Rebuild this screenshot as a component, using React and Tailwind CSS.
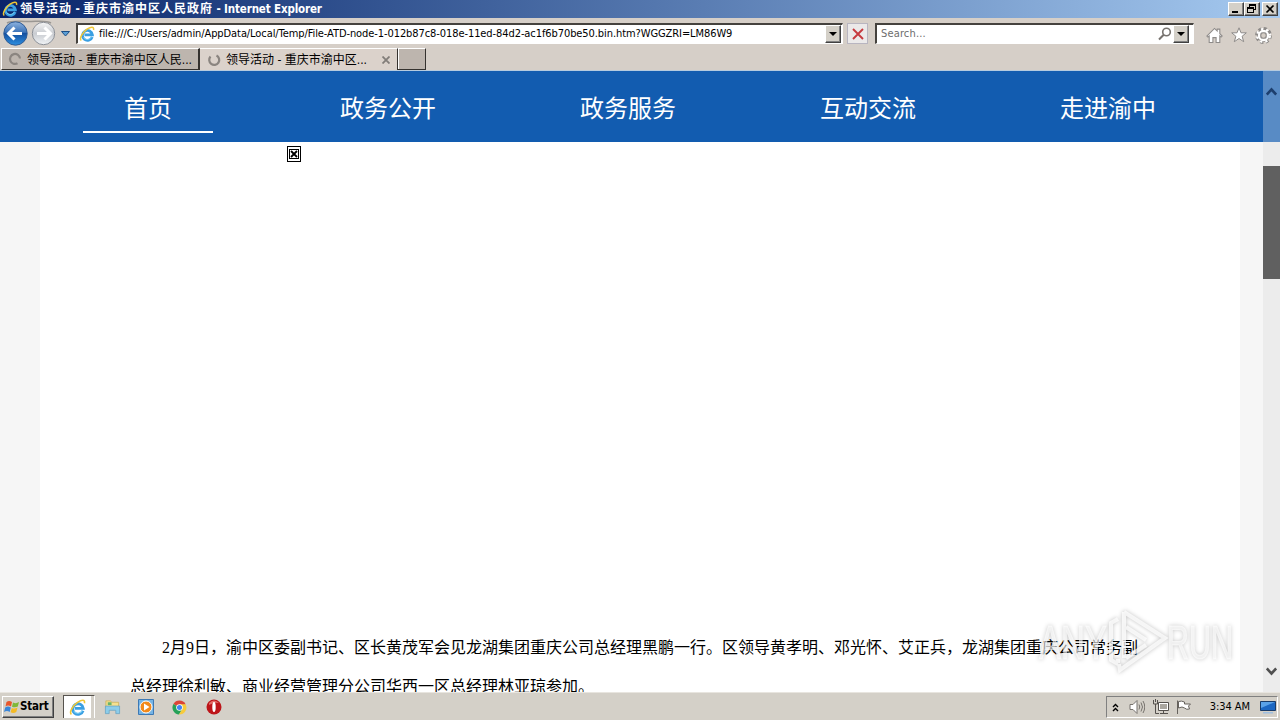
import { useState } from 'react'
import clsx from 'clsx'

const navItems = ['首页', '政务公开', '政务服务', '互动交流', '走进渝中']

const raised = 'bg-[#d4d0c8] border border-t-white border-l-white border-r-[#404040] border-b-[#404040] shadow-[inset_-1px_-1px_0_#808080]'
const sunken = 'bg-white border-t-2 border-l-2 border-t-[#45423e] border-l-[#45423e] border-r border-b border-r-white border-b-white'

function IeLogo({ className }) {
  return (
    <svg viewBox="0 0 16 16" className={className} fill="none">
      <path d="M13.200 11A5 5 0 1 1 13.400 8.800H5.500" stroke="#3a9fe2" strokeWidth="2.700" />
      <path d="M12.500 10.800A4.700 4.700 0 0 1 4.500 11.500" stroke="#7fd2f7" strokeWidth="1" />
      <path d="M2.300 14.500C-.2 12.700 3.600 6.300 8 3.200 11.800.7 15.300 0 14.500 4" stroke="#f0c736" strokeWidth="1.500" />
    </svg>
  )
}

function DropButton({ className }) {
  return (
    <button className={clsx('flex items-center justify-center shrink-0', raised, className)}>
      <svg viewBox="0 0 8 4" className="w-[8px] h-[4px]"><path d="M0 0h8L4 4z" fill="#000" /></svg>
    </button>
  )
}

function TitleBar() {
  return (
    <div className="h-[18px] flex items-center shrink-0 bg-linear-to-r from-[#0a246a] to-[#a6caf0] pl-[2px] pr-[2px]">
      <IeLogo className="w-[16px] h-[16px] shrink-0" />
      <h1 className="ml-[2px] text-[11.5px] leading-[18px] font-bold text-white whitespace-nowrap tracking-[-0.15px]">
        <span className="tracking-[1px] text-[12px]">领导活动</span> - <span className="tracking-[1px] text-[12px]">重庆市渝中区人民政府</span> - Internet Explorer
      </h1>
      <div className="ml-auto flex">
        <button className={clsx('w-[16px] h-[14px]', raised)}>
          <svg viewBox="0 0 14 12" className="w-[14px] h-[12px]"><path d="M3 8h6v2H3z" /></svg>
        </button>
        <button className={clsx('w-[16px] h-[14px]', raised)}>
          <svg viewBox="0 0 14 12" className="w-[14px] h-[12px]" fill="none" stroke="#000" shapeRendering="crispEdges">
            <path d="M4.5 4V1.5h6v5H9M4 2h7M2.5 4.5h6v5h-6zM2 5.5h7" />
          </svg>
        </button>
        <button className={clsx('w-[16px] h-[14px] ml-[2px]', raised)}>
          <svg viewBox="0 0 14 12" className="w-[14px] h-[12px]" stroke="#000" strokeWidth="1.7"><path d="M3.5 2.5l7 7M10.5 2.5l-7 7" /></svg>
        </button>
      </div>
    </div>
  )
}

function NavButtons() {
  return (
    <svg viewBox="0 0 76 30" className="w-[76px] h-[30px] shrink-0">
      <defs>
        <linearGradient id="back" x1="0" y1="0" x2="0" y2="1">
          <stop offset="0" stopColor="#8eb3df" />
          <stop offset=".45" stopColor="#3a72b8" />
          <stop offset=".5" stopColor="#1450a0" />
          <stop offset="1" stopColor="#2d8fe0" />
        </linearGradient>
        <linearGradient id="fwd" x1="0" y1="0" x2="0" y2="1">
          <stop offset="0" stopColor="#f6f6f6" />
          <stop offset=".5" stopColor="#c9ccd1" />
          <stop offset="1" stopColor="#f0f3f6" />
        </linearGradient>
      </defs>
      <path d="M7 5C12 2 18 3.500 28 3.500S46 2 51 5" fill="none" stroke="#9a9793" strokeWidth="1.500" />
      <circle cx="15.5" cy="15.5" r="11.7" fill="url(#back)" stroke="#315d96" />
      <path d="M9 15.5h13M14.5 9.5l-6 6 6 6" fill="none" stroke="#fff" strokeWidth="3" />
      <circle cx="43.5" cy="15.5" r="11.2" fill="url(#fwd)" stroke="#8d9198" />
      <path d="M37 15.5h13M44.500 9.500l6 6-6 6" fill="none" stroke="#fff" strokeWidth="3" />
      <path d="M61.500 13.500h8l-4 4.500z" fill="#5b9fd6" stroke="#1d4f86" />
    </svg>
  )
}

function AddressBar() {
  return (
    <div className="h-[30px] flex shrink-0">
      <NavButtons />
      <div className={clsx('w-[767px] h-[21px] mt-[5px] flex items-center', sunken)}>
        <IeLogo className="w-[16px] h-[16px] ml-[1px] shrink-0" />
        <span className="ml-[4px] text-[11px] text-black whitespace-nowrap tracking-[-0.083px]">
          file:///C:/Users/admin/AppData/Local/Temp/File-ATD-node-1-012b87c8-018e-11ed-84d2-ac1f6b70be50.bin.htm?WGGZRI=LM86W9
        </span>
        <DropButton className="ml-auto mr-px w-[16px] h-[18px]" />
      </div>
      <button className="ml-[4px] mt-[5px] w-[21px] h-[21px] border border-[#b8b5c0] bg-[#ebe9e9] flex items-center justify-center">
        <svg viewBox="0 0 12 12" className="w-[12px] h-[12px]" stroke="#c63a3f" strokeWidth="1.900"><path d="M1 1l10 10M11 1L1 11" /></svg>
      </button>
      <div className={clsx('ml-[7px] mt-[5px] w-[319px] h-[21px] flex items-center', sunken)}>
        <span className="ml-[4px] text-[11px] text-[#6d6d6d] tracking-[0.15px]">Search...</span>
        <svg viewBox="0 0 14 14" className="ml-auto w-[14px] h-[14px]" fill="none" stroke="#77736f">
          <circle cx="8.500" cy="5" r="3.800" strokeWidth="1.600" />
          <path d="M5.700 7.800L1 12.500" strokeWidth="2" />
        </svg>
        <DropButton className="w-[16px] h-[18px] mr-[4px] ml-[1px]" />
      </div>
      <div className="flex ml-[12px] mt-[9px] gap-[8px]">
        <svg viewBox="0 0 16 16" className="w-[17px] h-[17px]" fill="#fff" stroke="#8e8b89">
          <path d="M.8 8.500L8 1.300 10.500 3.800V2h2.500v4.300l2.200 2.200-1 1-1.200-1.100V14.500H9.500V10h-3v4.500H3V8.400L1.800 9.500z" />
        </svg>
        <svg viewBox="0 0 16 16" className="w-[16px] h-[16px]" fill="#fff" stroke="#8e8b89">
          <path d="M8 .8l2 5h5.300l-4.200 3.500 1.600 5.400L8 11.500l-4.700 3.200 1.600-5.400L.7 5.800H6z" />
        </svg>
        <svg viewBox="0 0 16 16" className="w-[17px] h-[17px]" fill="none">
          <circle cx="8" cy="8" r="6.300" stroke="#8e8b89" strokeWidth="3.200" strokeDasharray="2.900 2.050" />
          <circle cx="8" cy="8" r="4.600" fill="#fff" stroke="#8e8b89" strokeWidth="3" />
          <circle cx="8" cy="8" r="6" stroke="#fff" strokeWidth="2.200" strokeDasharray="2 2.950" strokeDashoffset="-.45" />
          <circle cx="8" cy="8" r="4.300" stroke="#fff" strokeWidth="2" />
          <circle cx="8" cy="8" r="2.600" fill="#d5cec6" stroke="#8e8b89" />
        </svg>
      </div>
    </div>
  )
}

function Spinner({ flipped }) {
  return (
    <svg viewBox="0 0 14 14" className="w-[14px] h-[14px] shrink-0" fill="none" stroke="#8b8580" strokeWidth="2.200">
      {flipped
        ? <path d="M9.500 2.500A5 5 0 1 1 3.500 3.600" />
        : <path d="M12 6.500A5 5 0 1 0 9.500 11.300" />}
    </svg>
  )
}

function Tabs() {
  return (
    <div className="h-[22px] flex shrink-0 text-[12px] leading-[21px] text-black whitespace-nowrap">
      <div className="w-[199px] ml-px flex items-center bg-[#bdb5ae] border-t border-l border-white border-r-2 border-r-[#35322f] border-b border-b-[#35322f]">
        <span className="ml-[6px] flex"><Spinner /></span>
        <span className="ml-[5px] pt-[2px]">领导活动 - 重庆市渝中区人民...</span>
      </div>
      <div className="w-[197px] flex items-center bg-[#dbd2cb] border-t border-white">
        <span className="ml-[7px] flex"><Spinner flipped /></span>
        <span className="ml-[5px] pt-[2px]">领导活动 - 重庆市渝中区...</span>
        <svg viewBox="0 0 8 8" className="w-[8px] h-[8px] ml-auto mr-[7px]" stroke="#827d79" strokeWidth="1.800"><path d="M.5.5l7 7M7.500.5l-7 7" /></svg>
      </div>
      <div className="w-[29px] bg-[#bdb5ae] border-l border-l-[#35322f] border-t border-t-white border-r border-r-[#35322f] border-b border-b-[#35322f] shadow-[inset_1px_0_0_#fff]" />
    </div>
  )
}

function ScrollBar() {
  return (
    <div className="w-[17px] shrink-0 flex flex-col bg-[#ececec]">
      <div className="h-[71px] bg-[#588bc5] pt-[16px] pl-[3px]">
        <svg viewBox="0 0 11 9" className="w-[11px] h-[9px]" fill="none" stroke="#1d3f6e" strokeWidth="2.600"><path d="M.8 7.500l4.700-5 4.700 5" /></svg>
      </div>
      <div className="h-[113px] mt-[24px] bg-[#606060]" />
      <div className="mt-auto pb-[16px] pl-[3px]">
        <svg viewBox="0 0 11 9" className="w-[11px] h-[9px]" fill="none" stroke="#505050" strokeWidth="2.600"><path d="M.8 1.500l4.700 5 4.700-5" /></svg>
      </div>
    </div>
  )
}

function Watermark() {
  return (
    <svg viewBox="0 0 206 74" className="absolute left-[1032px] top-[604px] w-[206px] h-[74px] pointer-events-none [filter:drop-shadow(0_0_2px_rgba(0,0,0,0.32))]">
      <g fill="#fff" fillOpacity=".6" stroke="#fff" strokeOpacity=".5" fontFamily="'Liberation Sans Narrow','Liberation Sans',sans-serif" fontSize="48">
        <text x="7" y="55" textLength="68" lengthAdjust="spacingAndGlyphs">ANY</text>
        <text x="135" y="55" textLength="66" lengthAdjust="spacingAndGlyphs">RUN</text>
      </g>
      <g fill="none" stroke="#fff" strokeOpacity=".75" strokeWidth="4">
        <path d="M86 59V55M86 15l-7 4v37l7 4M92 8l41 26-45 32-1-6M92 8v46M94 23l20 13M94 54l20-13" />
      </g>
    </svg>
  )
}

function Page() {
  const [active, setActive] = useState(0)

  return (
    <div className="flex-1 min-h-0 flex overflow-hidden bg-[#f6f6f6]">
      <div className="flex-1 flex flex-col">
        <nav className="h-[71px] shrink-0 bg-[#125cb0] pl-[28px] flex">
          {navItems.map((item, i) => (
            <button
              key={item}
              onClick={() => setActive(i)}
              className="w-[240px] flex justify-center text-white text-[24px]"
            >
              <span
                className={clsx(
                  'w-[130px] h-[62px] pt-[16px] leading-[44px] border-b-2',
                  active === i ? 'border-white' : 'border-transparent'
                )}
              >
                {item}
              </span>
            </button>
          ))}
        </nav>

        <article className="w-[1200px] h-[550px] ml-[40px] overflow-hidden bg-white pl-[90px]">
          {/* Missing picture */}
          <div className="h-[486px] pl-[157px] pt-[4px]">
            <svg viewBox="0 0 14 16" className="w-[14px] h-[16px]" fill="none" stroke="#000" shapeRendering="crispEdges">
              <path d="M.5.500h13v15H.5z" />
              <path d="M2.500 3.500h9v9h-9z" strokeWidth="1.500" />
              <path d="M4 5l6 6M10 5l-6 6" strokeWidth="1.800" shapeRendering="auto" />
            </svg>
          </div>
          <p className="text-[16px] leading-[39px] text-black whitespace-nowrap indent-[32px] font-['Liberation_Serif','Noto_Sans_CJK_SC',sans-serif]">
            2月9日，渝中区委副书记、区长黄茂军会见龙湖集团重庆公司总经理黑鹏一行。区领导黄孝明、邓光怀、艾正兵，龙湖集团重庆公司常务副<br />总经理徐利敏、商业经营管理分公司华西一区总经理林亚琼参加。
          </p>
        </article>
      </div>
      <ScrollBar />
    </div>
  )
}

function TaskBar() {
  return (
    <div className="h-[28px] shrink-0 bg-[#d4d0c8] border-t border-[#e8e5df] flex items-center">
      <button className={clsx('ml-[2px] w-[52px] h-[22px] mt-[1px] flex items-center pl-[1px]', raised)}>
        <svg viewBox="0 0 16 16" className="w-[16px] h-[16px] shrink-0">
          <path d="M2.500 3Q5 1 8 3L7 7.500Q4 5.500 1.500 7.500z" fill="#e8562a" />
          <path d="M9 3.500Q12 5 15 3L13.800 7.500Q11 9 8 7.800z" fill="#7fb839" />
          <path d="M1.200 8.500Q4 6.700 6.800 8.500L5.700 13Q3 11.200 0 13z" fill="#3a86d8" />
          <path d="M7.800 9Q10.500 10.300 13.500 8.500L12.300 13Q9.500 14.800 6.600 13.300z" fill="#f5bb25" />
        </svg>
        <span className="text-[11.5px] font-bold tracking-[-0.2px]">Start</span>
      </button>

      <div className="ml-[9px] w-[28px] h-[23px] bg-white border-t border-l border-[#57534e] flex items-center justify-center">
        <IeLogo className="w-[17px] h-[17px]" />
      </div>
      <div className="w-[4px] h-[23px] border-r border-t border-[#57534e] border-r-white bg-[#d4d0c8]" />

      <div className="flex items-center ml-[9px] gap-[17px] mt-[1px]">
        <svg viewBox="0 0 18 16" className="w-[17px] h-[16px]">
          <path d="M2 1.500h5l1 1.500h7.500V9H2z" fill="#f5e08f" stroke="#c7a84f" strokeWidth=".7" />
          <path d="M4 3h4v3H4z" fill="#67b36a" />
          <path d="M1.500 7h15v8h-4v-3.500h-7V15h-4z" fill="#8ccdea" stroke="#5b9dbf" strokeWidth=".7" />
        </svg>
        <svg viewBox="0 0 16 16" className="w-[16px] h-[16px]">
          <path d="M.5.500h15v15H.5z" fill="#75b4e5" stroke="#3d79b5" />
          <circle cx="8" cy="8" r="6" fill="#f28a1c" stroke="#fff" />
          <path d="M6 4.500v7L11.500 8z" fill="#fff" />
        </svg>
        <svg viewBox="0 0 16 16" className="w-[15px] h-[15px] ml-px">
          <path d="M8 8L1.500 4.200A7.500 7.500 0 0 1 14.500 4.500z" fill="#db4437" />
          <path d="M8 8h0L1.500 4.200A7.500 7.500 0 0 0 7.500 15.500L11 9.500z" fill="#25a158" />
          <path d="M8 4.500h6.500A7.500 7.500 0 0 1 7.500 15.500L11 9.500z" fill="#f7cb3b" />
          <circle cx="8" cy="8" r="3.500" fill="#fff" />
          <circle cx="8" cy="8" r="2.700" fill="#4285f4" />
        </svg>
        <svg viewBox="0 0 16 16" className="w-[16px] h-[16px] ml-[2px]">
          <circle cx="8" cy="8" r="7.500" fill="#bd1519" />
          <path d="M3 4Q8-1 13 4Q8 3 3 6z" fill="#e36b66" />
          <ellipse cx="8" cy="8" rx="1.700" ry="5" fill="#fff" />
        </svg>
      </div>

      {/* Tray */}
      <div className="ml-auto mr-[2px] mt-[1px] w-[172px] h-[22px] border border-t-[#808080] border-l-[#808080] border-r-white border-b-white flex items-center">
        <svg viewBox="0 0 7 9" className="w-[7px] h-[9px] ml-[5px]" fill="none" stroke="#000" strokeWidth="1.400"><path d="M1 4l2.500-2.500L6 4M1 8l2.500-2.500L6 8" /></svg>
        <svg viewBox="0 0 16 14" className="w-[16px] h-[14px] ml-[10px]" fill="#fff" stroke="#77736e">
          <path d="M1 4.500h3l4-4v13l-4-4H1z" />
          <path d="M10 4.500q1.500 2.500 0 5M12 2.500q3 4.500 0 9M14 1q3.500 6 0 12" fill="none" />
        </svg>
        <svg viewBox="0 0 16 16" className="w-[16px] h-[16px] ml-[8px]" fill="none" stroke="#55514d">
          <path d="M5.500 3.500h10v8h-10zM7 14.500h8M10.500 12v2" fill="#fff" />
          <path d="M7 5h7v5H7z" fill="#aaa69f" stroke="none" />
          <path d="M.5 1v4h4V1M2.500 5v9.500H6M2.500 0v3" />
        </svg>
        <svg viewBox="0 0 16 16" className="w-[16px] h-[16px] ml-[7px]" fill="#fff" stroke="#66625d">
          <path d="M1.500 1.500v13.500M2.500 2.500q3-1 6 .5v2h6l-2 2 1 3q-3 1-5-1t-6 0z" />
        </svg>
        <span className="ml-auto pt-px text-[11px] whitespace-nowrap tracking-[-0.05px]">3:34 AM</span>
        <svg viewBox="0 0 16 14" className="w-[16px] h-[14px] ml-[10px] mr-[1px]">
          <path d="M.5 1.500h15v9H.5z" fill="#1c67c2" stroke="#183b69" />
          <path d="M1 2h14L1 8z" fill="#5aa2e8" />
          <path d="M3 12h10v1.500H3z" fill="#9fbfe0" />
        </svg>
      </div>
    </div>
  )
}

export default function App() {
  return (
    <div className="relative w-[1280px] h-[720px] overflow-hidden flex flex-col bg-[#d6cfc8] font-['DejaVu_Sans_Condensed','DejaVu_Sans','Noto_Sans_CJK_SC',sans-serif]">
      <TitleBar />
      <AddressBar />
      <Tabs />
      <div className="h-px shrink-0 bg-[#b5cbdf]" />
      <Page />
      <TaskBar />
      <Watermark />
    </div>
  )
}
